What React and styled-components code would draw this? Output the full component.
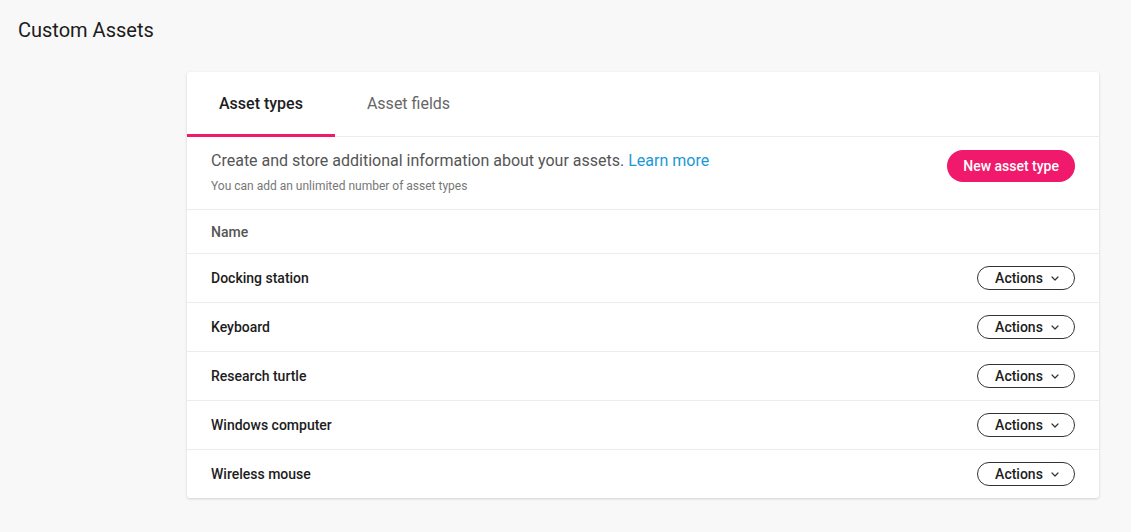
import React from 'react'
import styled, { createGlobalStyle } from 'styled-components'

const Global = createGlobalStyle`
  html, body {
    margin: 0;
    padding: 0;
    background: #f8f8f8;
    font-family: Roboto, "Liberation Sans", sans-serif;
    color: #1f1f1f;
  }
`

function Chevron() {
    return (
        <svg width="8" height="5" viewBox="0 0 8 5" fill="none">
            <path d="M1 1l3 3 3-3" stroke="#333" strokeWidth="1.2" strokeLinecap="round" strokeLinejoin="round"/>
        </svg>
    )
}

export default function App() {
    let types = ['Docking station', 'Keyboard', 'Research turtle', 'Windows computer', 'Wireless mouse']
    return (
        <Page>
            <Global/>
            <Title>Custom Assets</Title>
            <Card>
                <Tabs>
                    <Tab active>Asset types</Tab>
                    <Tab>Asset fields</Tab>
                </Tabs>
                <Intro>
                    <div>
                        <Lead>Create and store additional information about your assets. <Link>Learn more</Link></Lead>
                        <Hint>You can add an unlimited number of asset types</Hint>
                    </div>
                    <PrimaryButton>New asset type</PrimaryButton>
                </Intro>
                <HeadRow>Name</HeadRow>
                {types.map(t => (
                    <Row key={t}>
                        <Name>{t}</Name>
                        <ActionsButton>Actions <Chevron/></ActionsButton>
                    </Row>
                ))}
            </Card>
        </Page>
    )
}

const Page = styled.div`
  min-height: 532px;
  box-sizing: border-box;
  padding: 18px 32px 34px 18px;
`

const Title = styled.h1`
  margin: 0;
  font-size: 20px;
  line-height: 24px;
  font-weight: 400;
  color: #1c1c1c;
`

const Card = styled.div`
  margin: 30px 0 0 169px;
  background: #fff;
  border-radius: 3px;
  box-shadow: 0 1px 3px rgba(0, 0, 0, 0.16);
`

const Tabs = styled.div`
  display: flex;
  height: 64px;
  border-bottom: 1px solid #ececec;
`

const Tab = styled.div`
  display: flex;
  align-items: center;
  box-sizing: border-box;
  padding: 1px 32px 0 32px;
  font-size: 16px;
  font-weight: ${p => p.active ? 500 : 400};
  color: ${p => p.active ? '#1d1d1d' : '#666'};
  border-bottom: 3px solid ${p => p.active ? '#f0196b' : 'transparent'};
  margin-bottom: -1px;
`

const Intro = styled.div`
  display: flex;
  align-items: flex-start;
  justify-content: space-between;
  padding: 14px 24px 15px 24px;
  border-bottom: 1px solid #ececec;
`

const Lead = styled.div`
  font-size: 16px;
  line-height: 20px;
  color: #555;
`

const Link = styled.span`
  color: #1b98d5;
`

const Hint = styled.div`
  margin-top: 7px;
  font-size: 12px;
  line-height: 16px;
  color: #777;
`

const PrimaryButton = styled.button`
  margin-top: -1px;
  height: 32px;
  padding: 0 16px;
  border: none;
  border-radius: 16px;
  background: #f0196b;
  color: #fff;
  font-family: inherit;
  font-size: 14px;
  font-weight: 500;
`

const HeadRow = styled.div`
  height: 43px;
  display: flex;
  align-items: center;
  padding: 0 24px;
  font-size: 14px;
  font-weight: 500;
  color: #555;
  border-bottom: 1px solid #ececec;
`

const Row = styled.div`
  height: 48px;
  display: flex;
  align-items: center;
  justify-content: space-between;
  padding: 0 24px;
  border-bottom: 1px solid #ececec;

  &:last-child {
    border-bottom: none;
  }
`

const Name = styled.div`
  font-size: 14px;
  font-weight: 500;
  color: #1d1d1d;
`

const ActionsButton = styled.button`
  width: 98px;
  height: 24px;
  display: flex;
  align-items: center;
  justify-content: center;
  gap: 8px;
  padding: 0 0 0 2px;
  border: 1px solid #333;
  border-radius: 12px;
  background: #fff;
  color: #1d1d1d;
  font-family: inherit;
  font-size: 14px;
  font-weight: 500;
`
